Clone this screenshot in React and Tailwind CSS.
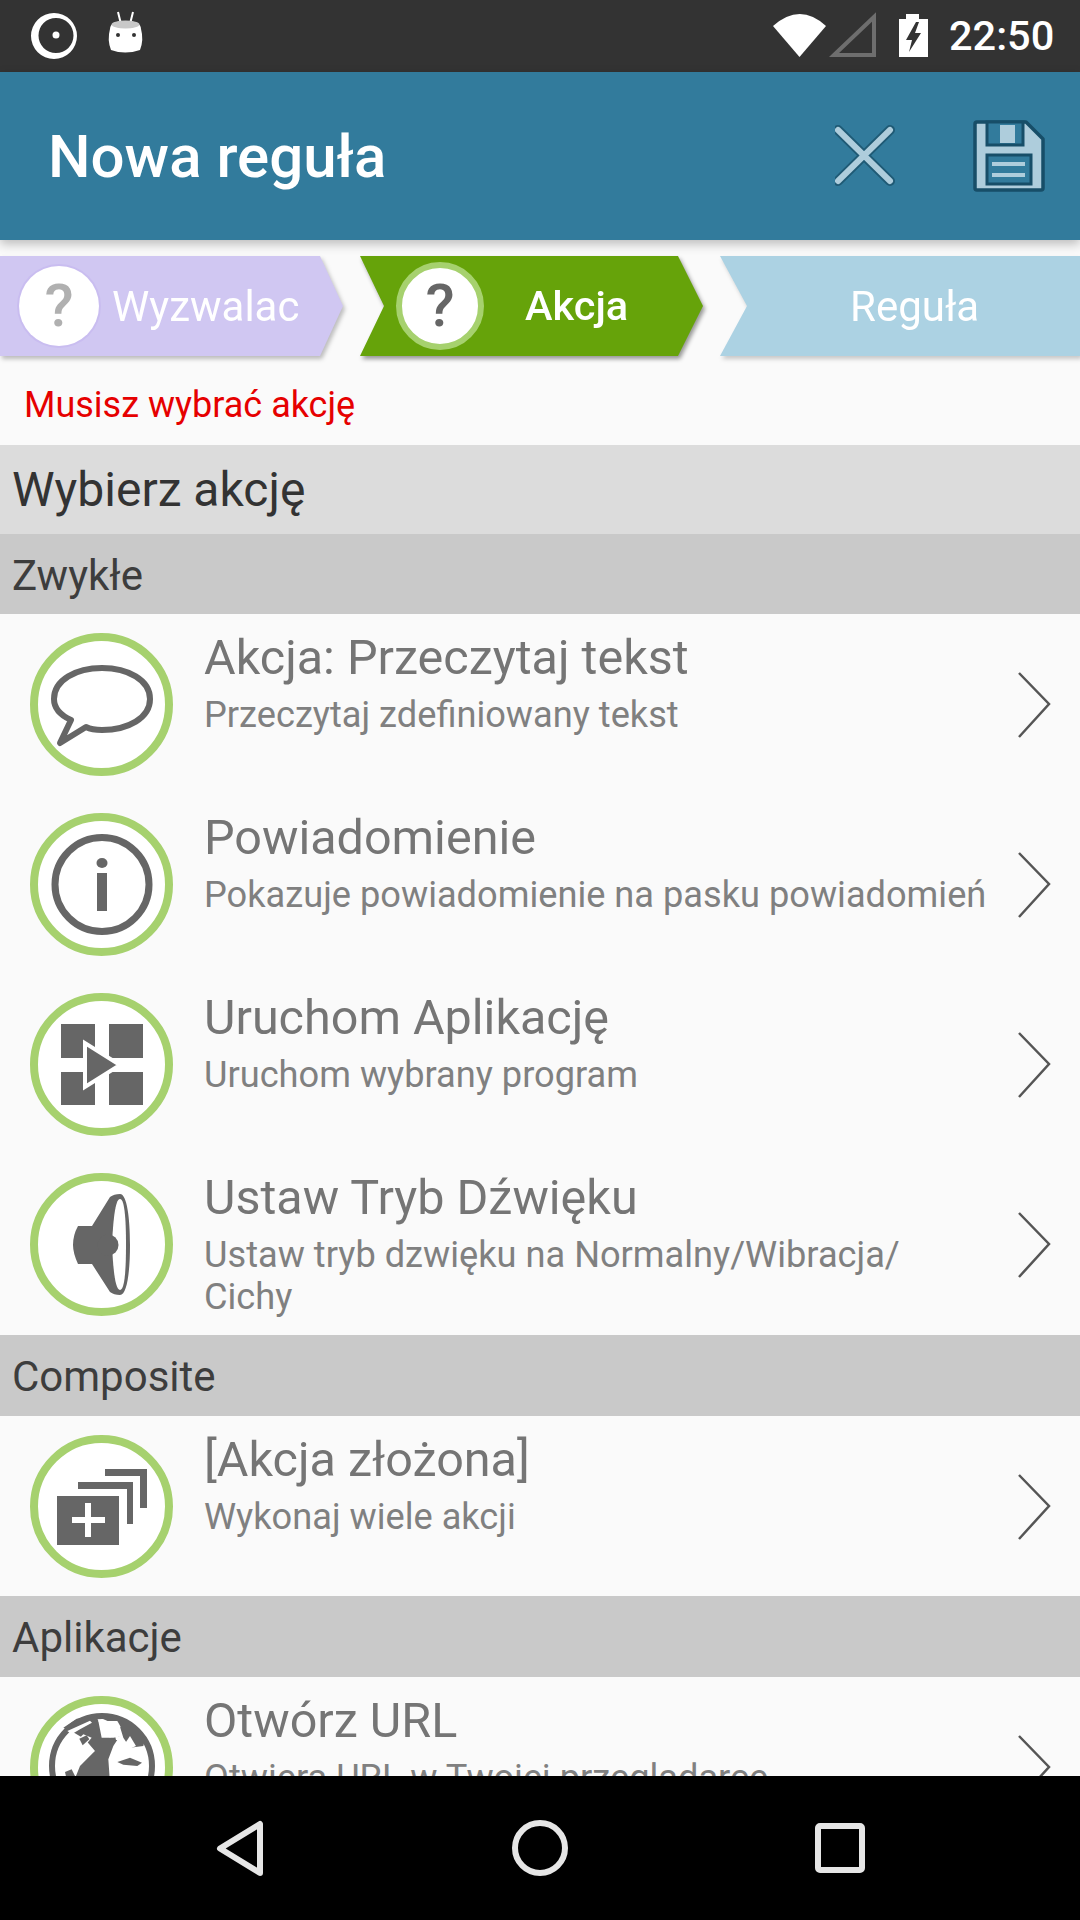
import React from 'react';

const gray = '#666666';

const SpeechIcon = () => (
    <path d="M41 87C30 82 24 75 24 66C24 47 46 35 72 35C98 35 120 47 120 66C120 85 98 97 72 97C66 97 60 96 56 94L30 110Z" fill="none" stroke={gray} strokeWidth="6" strokeLinejoin="round" />
);

const InfoIcon = () => (
    <g fill={gray}>
        <circle cx="72" cy="71.5" r="47" fill="none" stroke={gray} strokeWidth="7" />
        <ellipse cx="72" cy="50" rx="5.5" ry="5" />
        <rect x="67" y="60" width="10" height="38" />
    </g>
);

const AppsIcon = () => (
    <g fill={gray}>
        <rect x="31" y="31" width="34" height="34" />
        <rect x="79" y="31" width="34" height="34" />
        <rect x="31" y="79" width="34" height="33" />
        <rect x="79" y="79" width="34" height="33" />
        <polygon points="55,50 55,94 90,72" stroke="#ffffff" strokeWidth="4" />
    </g>
);

const SpeakerIcon = () => (
    <g>
        <path d="M48 53L62 53L80 24Q84 21 90 21C97 21 100 45 100 72C100 99 97 122 90 122Q84 122 80 119L62 91L48 91Q43 80 43 72Q43 62 48 53Z" fill={gray} />
        <path d="M90 26C95 26 96 50 96 72C96 94 95 117 90 117C85 117 83 94 82 72C83 50 85 26 90 26Z" fill="#ffffff" />
        <circle cx="78" cy="72" r="10.5" fill={gray} />
    </g>
);

const CompositeIcon = () => (
    <g fill={gray}>
        <polygon points="75,34 117,34 117,73 110,73 110,41 75,41" />
        <polygon points="48,47 103,47 103,89 97,89 97,54 48,54" />
        <rect x="27" y="61" width="62" height="49" />
        <rect x="42" y="82" width="33" height="6" fill="#ffffff" />
        <rect x="55" y="68" width="6" height="34" fill="#ffffff" />
    </g>
);

// rough world map, traced at 3x from the reference
const GlobeIcon = () => (
    <g>
        <circle cx="72" cy="70" r="50" fill="none" stroke={gray} strokeWidth="6" />
        <g transform="scale(0.3333)" fill={gray}>
            <path d="M100 95L140 68L200 62L205 75L215 125L250 125L268 122L250 150L235 190L240 260L130 260L150 210L185 175L195 165L165 130L135 112Z" />
            <path d="M205 62L270 62L345 130L340 150L300 155L280 125L270 92Z" />
            <path d="M262 198L300 185L336 200L322 210L280 206Z" />
            <path d="M105 228L125 220L135 240L110 250Z" />
            <path d="M205 75L262 75L272 92L240 125L222 100Z" fill="#ffffff" />
            <path d="M112 105L180 74L186 80L150 100L125 115Z" fill="#ffffff" />
            <path d="M134 140L160 115L185 125L160 155Z" fill="#ffffff" />
            <path d="M148 128L170 118L178 130L158 148Z" fill={gray} />
            <path d="M256 122L272 122L268 132L258 132Z" fill="#ffffff" />
            <path d="M280 150L300 120L318 150L296 160Z" fill="#ffffff" />
        </g>
    </g>
);

const items = [
    { section: 'Zwykłe', first: true },
    { title: 'Akcja: Przeczytaj tekst', sub: 'Przeczytaj zdefiniowany tekst', Icon: SpeechIcon },
    { title: 'Powiadomienie', sub: 'Pokazuje powiadomienie na pasku powiadomień', Icon: InfoIcon },
    { title: 'Uruchom Aplikację', sub: 'Uruchom wybrany program', Icon: AppsIcon },
    { title: 'Ustaw Tryb Dźwięku', sub: 'Ustaw tryb dzwięku na Normalny/Wibracja/ Cichy', Icon: SpeakerIcon, tall: true },
    { section: 'Composite' },
    { title: '[Akcja złożona]', sub: 'Wykonaj wiele akcji', Icon: CompositeIcon },
    { section: 'Aplikacje' },
    { title: 'Otwórz URL', sub: 'Otwiera URL w Twojej przeglądarce', Icon: GlobeIcon },
];

const SectionHeader = ({ label, first }) => (
    <div className={`shrink-0 bg-[#c9c9c9] pl-[12px] pt-[2px] flex items-center text-[42px] text-[#3d3d3d] ${first ? 'h-[80px]' : 'h-[81px]'}`}>{label}</div>
);

const Row = ({ title, sub, Icon, tall }) => (
    <div className={`flex shrink-0 items-start ${tall ? 'h-[181px]' : 'h-[180px]'}`}>
        <div className="ml-[30px] mt-[19px] h-[143px] w-[143px] shrink-0 rounded-full border-[8px] border-[#a6d16e] bg-white relative">
            <svg className="absolute -left-[8px] -top-[8px]" width="143" height="143" viewBox="0 0 143 143">
                <Icon />
            </svg>
        </div>
        <div className="ml-[31px] w-[790px] pt-[17px]">
            <div className="text-[48.500px] leading-[54px] text-[#757575]">{title}</div>
            <div className="mt-[9px] w-[787px] text-[36.200px] leading-[42px] text-[#808080]">{sub}</div>
        </div>
        <svg className="mt-[56px] ml-[18px] shrink-0" width="40" height="70" viewBox="0 0 40 70">
            <polyline points="7,3 37,34 7,67" fill="none" stroke="#555555" strokeWidth="2.5" />
        </svg>
    </div>
);

const StatusBar = () => (
    <div className="h-[72px] shrink-0 bg-[#333333] flex items-center">
        <svg className="ml-[29px]" width="120" height="72" viewBox="0 0 120 72">
            <path fillRule="evenodd" d="M25 13A23 23 0 1 1 25 59A23 23 0 1 1 25 13ZM27 18A17.500 17.500 0 1 0 27 53A17.500 17.500 0 1 0 27 18Z" fill="#ffffff" />
            <circle cx="27" cy="35" r="3.500" fill="#ffffff" />
            <path d="M89 12L92 24M104 12L101 24" stroke="#ffffff" strokeWidth="2" />
            <path d="M81 29Q81 21 96.500 21Q112 21 112 29Q115 40 111 50Q96 55 82 50Q78 40 81 29Z" fill="#ffffff" />
            <ellipse cx="96.500" cy="24.500" rx="14" ry="4" fill="#c8c8c8" />
            <circle cx="89" cy="35" r="2" fill="#333333" />
            <circle cx="105" cy="35" r="2" fill="#333333" />
        </svg>
        <svg className="ml-[623px]" width="160" height="72" viewBox="0 0 160 72">
            <path d="M1 26Q28 2 54 26L27.500 57Z" fill="#ffffff" />
            <path d="M62 55L102 17L102 55Z" fill="none" stroke="#6e6e6e" strokeWidth="4" />
            <path d="M127 19L134 19L134 14L147 14L147 19L156 19L156 57L127 57Z" fill="#ffffff" />
            <path d="M144 22L134 40L140 40L137 52L149 33L143 33L147 22Z" fill="#333333" />
        </svg>
        <span className="ml-[17px] text-[41.500px] font-medium text-white leading-none">22:50</span>
    </div>
);

const AppBar = () => (
    <div className="relative z-10 h-[168px] shrink-0 bg-[#327b9c] shadow-[0_4px_10px_rgba(0,0,0,0.25)] flex items-center">
        <span className="ml-[48px] mt-[2px] text-[60px] font-medium text-white">Nowa reguła</span>
        <svg className="ml-auto mr-[30px]" width="215" height="168" viewBox="0 0 215 168">
            <g strokeLinecap="round" fill="none">
                <path d="M3 58L55 109M55 58L3 109" stroke="#1f5a75" strokeWidth="10" />
                <path d="M3 58L55 109M55 58L3 109" stroke="#aecddc" strokeWidth="6" />
            </g>
            <path d="M142 50Q140 50 140 52L140 116Q140 118 142 118L206 118Q208 118 208 116L208 67L191 50Z" fill="#aecddc" stroke="#174e68" strokeWidth="3.500" strokeLinejoin="round" />
            <path d="M152 50L152 73L188 73L188 50Z" fill="#327b9c" stroke="#174e68" strokeWidth="3" />
            <rect x="165" y="53" width="15" height="18" fill="#aecddc" />
            <rect x="152" y="83" width="44" height="29" fill="#327b9c" stroke="#174e68" strokeWidth="3" />
            <rect x="157" y="90" width="33" height="4" fill="#aecddc" />
            <rect x="157" y="101" width="33" height="4" fill="#aecddc" />
        </svg>
    </div>
);

const Steps = () => (
    <div className="flex h-[100px] gap-[17px] mt-[16px] shrink-0">
        <div className="w-[343px] drop-shadow-[2px_3px_2px_rgba(0,0,0,0.25)]">
            <div className="h-full bg-[#d0c7f2] flex items-center [clip-path:polygon(0_0,320px_0,343px_50%,320px_100%,0_100%)]">
                <div className="ml-[19px] h-[80px] w-[80px] rounded-full bg-white shadow-[0_0_0_2px_#c9bdf0] flex items-center justify-center text-[60px] font-medium text-[#b0b0b0]">?</div>
                <span className="ml-[13px] text-[42px] text-white">Wyzwalac</span>
            </div>
        </div>
        <div className="w-[343px] drop-shadow-[2px_3px_2px_rgba(0,0,0,0.4)]">
            <div className="h-full bg-[#66a30a] flex items-center [clip-path:polygon(0_0,318px_0,343px_50%,318px_100%,0_100%,24px_50%)]">
                <div className="ml-[36px] h-[88px] w-[88px] rounded-full bg-white border-[6px] border-[#a6d16e] flex items-center justify-center text-[60px] font-medium text-[#666666]">?</div>
                <span className="ml-[41px] text-[41.500px] font-medium text-white">Akcja</span>
            </div>
        </div>
        <div className="flex-1 drop-shadow-[2px_3px_2px_rgba(0,0,0,0.2)]">
            <div className="h-full bg-[#acd2e3] flex items-center [clip-path:polygon(0_0,360px_0,360px_100%,0_100%,27px_50%)]">
                <span className="ml-[130px] text-[42px] text-white">Reguła</span>
            </div>
        </div>
    </div>
);

const NavBar = () => (
    <div className="h-[144px] shrink-0 bg-black flex items-center justify-center">
        <svg width="1080" height="144" viewBox="0 0 1080 144">
            <path d="M260 48L260 97L220 72.500Z" fill="none" stroke="#e6e6e6" strokeWidth="6" strokeLinejoin="round" />
            <circle cx="540" cy="72" r="25" fill="none" stroke="#e6e6e6" strokeWidth="6" />
            <rect x="818" y="50" width="44" height="44" rx="2" fill="none" stroke="#e6e6e6" strokeWidth="6" />
        </svg>
    </div>
);

export default function App() {
    return (
        <div className="h-[1920px] w-[1080px] overflow-hidden bg-[#fafafa] flex flex-col font-['Roboto',sans-serif]">
            <StatusBar />
            <AppBar />
            <Steps />
            <div className="h-[89px] shrink-0 pl-[24px] pt-[8px] flex items-center text-[36px] text-[#e60000]">Musisz wybrać akcję</div>
            <div className="h-[89px] shrink-0 bg-[#dcdcdc] pl-[12px] flex items-center text-[48px] text-[#333333]">Wybierz akcję</div>
            <div className="flex-1 min-h-0 overflow-hidden flex flex-col">
                {items.map((item) =>
                    item.section ? (
                        <SectionHeader key={item.section} label={item.section} first={item.first} />
                    ) : (
                        <Row key={item.title} {...item} />
                    )
                )}
            </div>
            <NavBar />
        </div>
    );
}
